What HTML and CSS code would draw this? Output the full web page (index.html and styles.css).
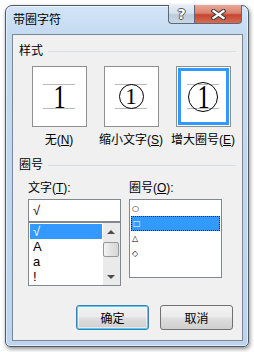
FILE: index.html
```html
<!DOCTYPE html>
<html lang="zh">
<head>
    <meta charset="UTF-8">
    <title>带圈字符</title>
    <link rel="stylesheet" href="styles.css">
</head>
<body>
    <div class="window">
        <div class="titlebar">
            <span class="title">带圈字符</span>
            <div class="caption">
                <button class="cap help">?</button>
                <button class="cap close">
                    <svg width="15" height="11" viewBox="0 0 15 11">
                        <path d="M2.5 2 L12.5 9 M12.5 2 L2.5 9" stroke="#3b3b3b" stroke-width="4.2" stroke-linecap="square"/>
                        <path d="M2.5 2 L12.5 9 M12.5 2 L2.5 9" stroke="#fff" stroke-width="2.2" stroke-linecap="square"/>
                    </svg>
                </button>
            </div>
        </div>

        <div class="client">
            <div class="legend">样式</div>
            <div class="styles">
                <div class="opt">
                    <div class="preview"><div class="frame">
                        <div class="guide"><span class="digit big">1</span></div>
                    </div></div>
                    <span class="opt-label">无(<u>N</u>)</span>
                </div>
                <div class="opt">
                    <div class="preview"><div class="frame">
                        <div class="guide"><span class="ring small"><span class="digit mid">1</span></span></div>
                    </div></div>
                    <span class="opt-label">缩小文字(<u>S</u>)</span>
                </div>
                <div class="opt">
                    <div class="preview"><div class="frame selected">
                        <div class="guide"><span class="ring large"><span class="digit big">1</span></span></div>
                    </div></div>
                    <span class="opt-label">增大圈号(<u>E</u>)</span>
                </div>
            </div>

            <div class="legend second">圈号</div>
            <div class="pickers">
                <div class="picker">
                    <div class="field-label">文字(<u>T</u>):</div>
                    <div class="textbox">√</div>
                    <div class="listbox text-list">
                        <ul class="items">
                            <li class="sel">√</li>
                            <li>A</li>
                            <li>a</li>
                            <li>!</li>
                        </ul>
                        <div class="scrollbar">
                            <div class="arrow up"></div>
                            <div class="thumb"></div>
                            <div class="track"></div>
                            <div class="arrow down"></div>
                        </div>
                    </div>
                </div>
                <div class="picker">
                    <div class="field-label">圈号(<u>O</u>):</div>
                    <ul class="listbox symbols">
                        <li>○</li>
                        <li class="sel">□</li>
                        <li>△</li>
                        <li>◇</li>
                    </ul>
                </div>
            </div>

            <div class="actions">
                <button class="btn default">确定</button>
                <button class="btn">取消</button>
            </div>
        </div>
    </div>
</body>
</html>
```

FILE: styles.css
```css
* { margin: 0; padding: 0; box-sizing: border-box; }
body {
    background: #fff;
    font-family: "Liberation Sans", "Noto Sans CJK SC", sans-serif;
    font-size: 12px;
    color: #000;
}
.window {
    margin: 5px;
    width: 244px;
    height: 342px;
    border: 1px solid #4f5a66;
    border-radius: 7px 7px 5px 5px;
    background: linear-gradient(to bottom, #d3e4f6 0, #c4daf1 28px, #bcd4ee 100%);
    box-shadow: inset 0 0 0 1px rgba(255,255,255,0.55), 1px 2px 4px rgba(0,0,0,0.45);
    display: flex;
    flex-direction: column;
}
.titlebar {
    height: 28px;
    display: flex;
    justify-content: space-between;
    align-items: flex-start;
    padding: 0 6px 0 7px;
}
.title {
    line-height: 14px;
    padding-top: 7px;
}
.caption {
    display: flex;
    margin-top: -1px;
}
.cap {
    height: 19px;
    border: 1px solid #5b6876;
    border-top: none;
    display: flex;
    align-items: center;
    justify-content: center;
}
.help {
    width: 26px;
    border-right: none;
    border-radius: 0 0 0 4px;
    background: linear-gradient(to bottom, #e6eef6 0, #d6e2ee 45%, #bccbdb 55%, #c9d8e7 100%);
    color: #fff;
    font: bold 14px "DejaVu Sans", sans-serif;
    text-shadow: 1px 0 0 #4a5664, -1px 0 0 #4a5664, 0 1px 0 #4a5664, 0 -1px 0 #4a5664;
}
.close {
    width: 48px;
    border-radius: 0 0 4px 0;
    background: linear-gradient(to bottom, #e9a899 0, #d9826d 45%, #c6452f 55%, #d66d55 100%);
}
.client {
    flex: 1;
    margin: 0 5px 5px 6px;
    border: 1px solid #7b8794;
    background: #f0f0f0;
    padding: 9px 6px 0 6px;
}
.legend {
    display: flex;
    align-items: center;
    gap: 5px;
    height: 14px;
    line-height: 14px;
}
.legend::after {
    content: "";
    flex: 1;
    border-top: 1px solid #d5dfe5;
}
.legend.second { margin-top: 11px; }
.styles {
    display: grid;
    grid-template-columns: 72px 72px 72px;
    margin: 8px 0 0 4px;
}
.opt {
    display: flex;
    flex-direction: column;
    align-items: center;
}
.preview {
    width: 55px;
    height: 61px;
    border: 1px solid #8e8f8f;
    background: #fff;
    padding: 1px;
}
.frame {
    height: 100%;
    border: 3px solid transparent;
}
.frame.selected { border-color: #3399ff; }
.guide {
    width: 32px;
    height: 25px;
    margin: 13px auto 0;
    border-top: 1px solid #b9b9b9;
    border-bottom: 1px solid #b9b9b9;
    display: flex;
    align-items: center;
    justify-content: center;
}
.digit {
    font-family: "Liberation Serif", serif;
    display: block;
}
.digit.big {
    font-size: 34px;
    line-height: 23px;
    transform: scaleX(0.72);
}
.digit.mid { font-size: 23px; line-height: 16px; }
.ring {
    flex: none;
    border: 1px solid #000;
    border-radius: 50%;
    display: flex;
    align-items: center;
    justify-content: center;
}
.ring.small { width: 25px; height: 25px; }
.ring.large { width: 30px; height: 30px; }
.opt-label {
    margin-top: 6px;
    line-height: 14px;
    white-space: nowrap;
}
.pickers {
    display: flex;
    gap: 8px;
    margin: 9px 0 0 9px;
}
.picker { width: 93px; }
.field-label {
    line-height: 14px;
    margin-bottom: 4px;
}
.textbox {
    height: 23px;
    border: 1px solid #828790;
    background: #fff;
    padding: 3px 0 0 4px;
    font-size: 13px;
    line-height: 16px;
}
.listbox {
    border: 1px solid #828790;
    background: #fff;
    list-style: none;
}
.text-list {
    height: 64px;
    display: flex;
}
.items {
    flex: 1;
    list-style: none;
    padding: 1px;
}
.items li {
    height: 15px;
    line-height: 15px;
    padding-left: 3px;
    font-size: 13px;
}
.sel {
    background: #3399ff;
    color: #fff;
}
.scrollbar {
    width: 17px;
    background: #eaeaea;
    display: flex;
    flex-direction: column;
    padding-right: 1px;
}
.arrow {
    height: 17px;
    display: flex;
    align-items: center;
    justify-content: center;
}
.arrow::before {
    content: "";
    border-left: 4px solid transparent;
    border-right: 4px solid transparent;
}
.arrow.up::before { border-bottom: 4px solid #4d4d4d; }
.arrow.down::before { border-top: 4px solid #4d4d4d; }
.thumb {
    height: 15px;
    margin: 2px 0 0 0;
    border: 1px solid #979797;
    border-radius: 2px;
    background: linear-gradient(to right, #f3f3f3, #e2e2e2 50%, #d6d6d6);
}
.track { flex: 1; }
.symbols {
    height: 79px;
    padding: 1px 1px 0 1px;
}
.symbols li {
    height: 15px;
    padding-left: 1px;
    font: bold 8px/15px "DejaVu Sans", sans-serif;
}
.symbols .sel { border: 1px dotted #222; line-height: 13px; }
.actions {
    display: flex;
    justify-content: flex-end;
    gap: 11px;
    margin-top: 19px;
    padding-right: 3px;
}
.btn {
    width: 73px;
    height: 25px;
    border: 1px solid #707070;
    border-radius: 3px;
    background: linear-gradient(to bottom, #f2f2f2 0, #ebebeb 45%, #dddddd 55%, #cfcfcf 100%);
    font: 12px "Liberation Sans", "Noto Sans CJK SC", sans-serif;
    color: #000;
}
.btn.default {
    border-color: #3c7fb1;
    box-shadow: inset 0 0 0 1px #48d3f4, inset 0 0 0 2px rgba(255,255,255,0.5);
}
```
